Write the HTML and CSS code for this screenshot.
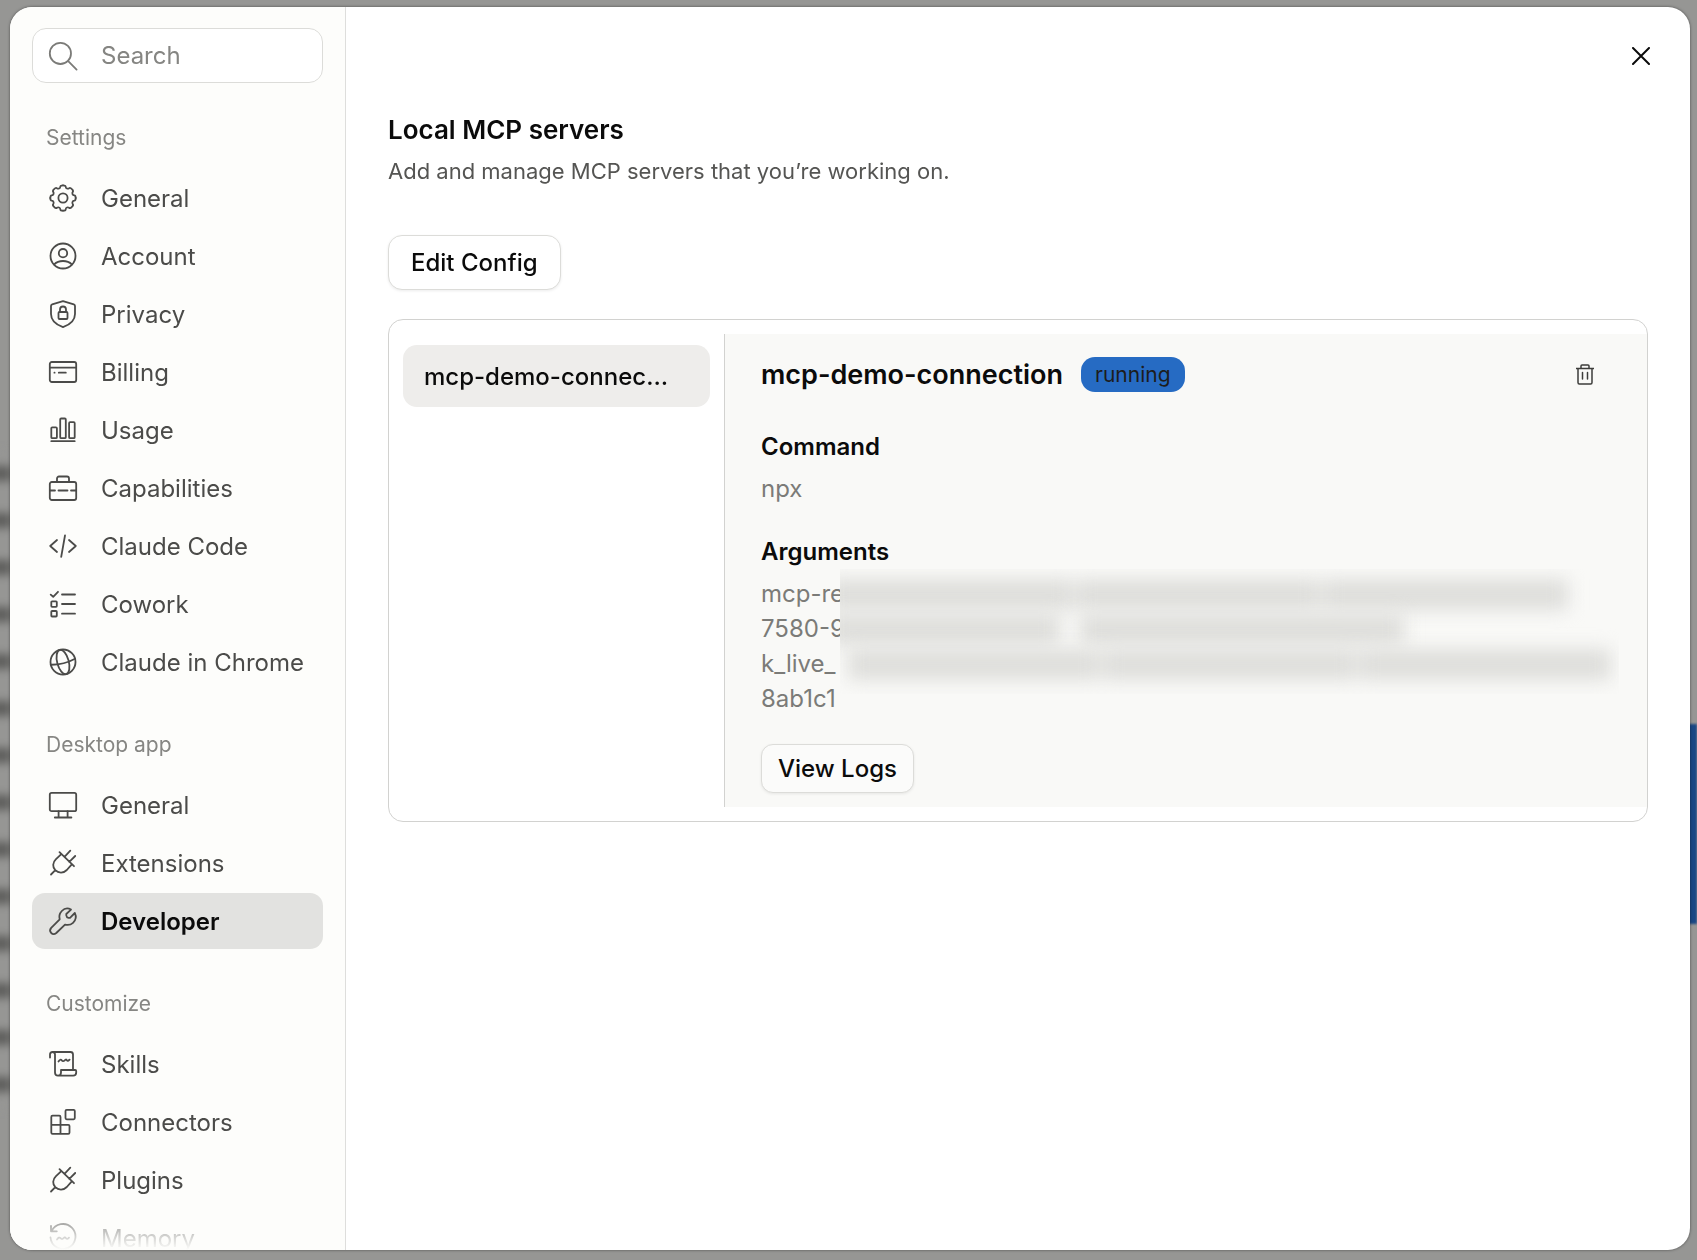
FILE: index.html
```
<!DOCTYPE html>
<html lang="en">
<head>
    <meta charset="UTF-8">
    <meta name="viewport" content="width=device-width, initial-scale=1.0">
    <title>Settings - Developer</title>
    <link rel="stylesheet" href="styles.css">
</head>
<body>
    <div class="behind" aria-hidden="true">
        <div class="behind-text"></div>
        <div class="behind-bubble"></div>
    </div>

    <div class="dialog" role="dialog" aria-label="Settings">
        <aside class="sidebar">
            <div class="search">
                <svg class="icon" viewBox="0 0 28 28"><circle cx="11.4" cy="11.4" r="10.6"/><path d="M19.2 19.2l8.4 8.4"/></svg>
                <input type="search" placeholder="Search" aria-label="Search">
            </div>

            <nav>
                <h2>Settings</h2>
                <ul>
                    <li><a href="#general">
                        <svg class="icon" viewBox="0 0 28 28">
                            <path id="gear" d="M14 1.3Q16.5 1.3 16.7 2.7Q16.8 4.1 17.9 4.5Q19 5 20.1 4.2Q21.2 3.3 22.9 5.1Q24.7 6.8 23.8 7.9Q23 9 23.5 10.1Q23.9 11.2 25.3 11.3Q26.7 11.5 26.7 14"/>
                            <use href="#gear" transform="rotate(90 14 14)"/>
                            <use href="#gear" transform="rotate(180 14 14)"/>
                            <use href="#gear" transform="rotate(270 14 14)"/>
                            <circle cx="14" cy="14" r="4.6"/>
                        </svg>General</a></li>
                    <li><a href="#account">
                        <svg class="icon" viewBox="0 0 28 28"><circle cx="14" cy="14" r="12.5"/><circle cx="14" cy="11.2" r="4.2"/><path d="M5.2 22.4C7.5 20 10.5 19 14 19s6.5 1 8.8 3.4"/></svg>Account</a></li>
                    <li><a href="#privacy">
                        <svg class="icon" viewBox="0 0 28 28"><path d="M14 1.2L24.8 4.3Q26 4.7 26 6V14C26 20.5 21.5 24.5 14 27.2C6.5 24.5 2 20.5 2 14V6Q2 4.7 3.2 4.3Z"/><rect x="9.5" y="12" width="9" height="7" rx="1"/><path d="M11 12V9.500a3 3 0 0 1 6 0V12"/></svg>Privacy</a></li>
                    <li><a href="#billing">
                        <svg class="icon" viewBox="0 0 28 28"><rect x=".8" y="4" width="26.4" height="20" rx="2"/><path d="M1 9.700h26M9.800 14.700h7M5.400 14.700h.2"/></svg>Billing</a></li>
                    <li><a href="#usage">
                        <svg class="icon" viewBox="0 0 28 28"><rect x="2.3" y="11.3" width="5.6" height="10.9" rx="1"/><rect x="11.2" y="2.5" width="5.6" height="19.7" rx="1"/><rect x="20.1" y="6.2" width="5.6" height="16" rx="1"/><path d="M2.300 25.200h23.400"/></svg>Usage</a></li>
                    <li><a href="#capabilities">
                        <svg class="icon" viewBox="0 0 28 28"><rect x=".8" y="8" width="26.4" height="18" rx="2"/><path d="M8 8V4.500a2 2 0 0 1 2-2h8a2 2 0 0 1 2 2V8M1 16.500h5M9.500 16.500h9M22 16.500h5"/></svg>Capabilities</a></li>
                    <li><a href="#claude-code">
                        <svg class="icon" viewBox="0 0 28 28"><path d="M8 8L1.2 14L8 20M20 8L26.8 14L20 20M16 3.500L12.200 24.800"/></svg>Claude Code</a></li>
                    <li><a href="#cowork">
                        <svg class="icon" viewBox="0 0 28 28"><path d="M1.700 4.600L4.200 6.800L9 1.800M13 4.500h13M13 14h13M13 23.700h13"/><rect x="2.3" y="11.3" width="5.5" height="5.5" rx=".8"/><rect x="2.3" y="21" width="5.5" height="5.5" rx=".8"/></svg>Cowork</a></li>
                    <li><a href="#chrome">
                        <svg class="icon" viewBox="0 0 28 28"><circle cx="14" cy="14" r="12.5"/><g transform="rotate(-15 14 14)"><ellipse cx="14" cy="14" rx="5.8" ry="12.5"/><path d="M1.500 13.500Q14 17 26.500 14"/></g></svg>Claude in Chrome</a></li>
                </ul>

                <h2>Desktop app</h2>
                <ul>
                    <li><a href="#desktop-general">
                        <svg class="icon" viewBox="0 0 28 28"><rect x=".8" y="1.8" width="26.4" height="18.4" rx="1.8"/><path d="M9.600 20.200v6M18.600 20.200v6M5.800 26.500h16.600"/></svg>General</a></li>
                    <li><a href="#extensions">
                        <svg class="icon" viewBox="0 0 28 28"><g id="plug"><path d="M10.500 3.200L25 17.200M12.300 5.200L7 10.200C3.500 13.500 3.300 18 6.300 21.200C9.600 24.500 14.500 24.300 17.800 21L22.800 15.300M2 25.500L6.300 21.200M15.500 7.800L21.300 1.700M20.300 12.800L26.200 7"/></g></svg>Extensions</a></li>
                    <li><a href="#developer" class="active" aria-current="page">
                        <svg class="icon" viewBox="0 0 28 28"><path d="M22 2.600L17.300 7V8.500Q17.500 10.500 19.500 10.800H21L25.800 6C27.500 9.500 26.500 13.500 24 15.800C21.700 18 18.700 18.300 16 17.600L7.300 26C5.500 27.500 3.500 27.300 2.200 26C.8 24.500 .8 22.500 2.200 20.900L10.700 12.300C9.900 9.300 10.600 6.300 12.800 4C15.300 1.400 19 .8 22 2.600Z"/></svg>Developer</a></li>
                </ul>

                <h2>Customize</h2>
                <ul>
                    <li><a href="#skills">
                        <svg class="icon" viewBox="0 0 28 28"><path d="M1 7.500V4.500Q1 2 3.500 2H21.500Q24 2 24 4.500V19.800M3.500 2Q6 2 6 4.500V22.500Q6 25.700 9 25.700H24.200Q27.200 25.700 27.200 22.500V21Q27.200 20 26.200 20H12V22.500Q12 25.700 9 25.700M9.500 11.600Q11.500 8.500 12.700 10.300T15.800 10.300Q16.800 8.800 17.800 10.200T20.600 9.600"/></svg>Skills</a></li>
                    <li><a href="#connectors">
                        <svg class="icon" viewBox="0 0 28 28"><path d="M11.500 16.800V9Q11.500 7.700 10.300 7.700H3.500Q2.300 7.700 2.300 9V24.500Q2.300 25.800 3.500 25.800H19.300Q20.500 25.800 20.500 24.500V18Q20.500 16.800 19.300 16.800H2.300M11.500 16.800V25.800"/><rect x="16.5" y="1.8" width="9.3" height="9.5" rx="1.2"/></svg>Connectors</a></li>
                    <li><a href="#plugins">
                        <svg class="icon" viewBox="0 0 28 28"><use href="#plug"/></svg>Plugins</a></li>
                    <li><a href="#memory">
                        <svg class="icon" viewBox="0 0 28 28"><path d="M2 2V7.300H7.800M2.600 7.300A12.500 12.500 0 1 1 1.500 13.500M8 15.500Q10 12.500 11.500 14.200T14.600 14.200Q15.800 12.700 17 14.200T20 13.600"/></svg>Memory</a></li>
                </ul>
            </nav>
        </aside>

        <main>
            <header class="topbar">
                <button class="icon-button" aria-label="Close">
                    <svg class="close-icon" viewBox="0 0 18 18"><path d="M1 1l16 16M17 1L1 17"/></svg>
                </button>
            </header>

            <div class="content">
                <h1>Local MCP servers</h1>
                <p class="subtitle">Add and manage MCP servers that you’re working on.</p>
                <button class="btn">Edit Config</button>

                <section class="servers">
                    <div class="server-list">
                        <button class="server">mcp-demo-connection</button>
                    </div>

                    <div class="detail">
                        <div class="detail-head">
                            <h2>mcp-demo-connection</h2>
                            <span class="badge">running</span>
                            <button class="icon-button delete" aria-label="Delete server">
                                <svg class="trash-icon" viewBox="0 0 18 21"><path d="M0 4.500H18M5 4.500V2Q5 1 6 1H12Q13 1 13 2V4.500M2 4.500V18.500Q2 20 3.300 20H14.700Q16 20 16 18.500V4.500M6.500 8.500V15M11.500 8.500V15"/></svg>
                            </button>
                        </div>

                        <div class="field">
                            <h3>Command</h3>
                            <p>npx</p>
                        </div>

                        <div class="field">
                            <h3>Arguments</h3>
                            <div class="args">
                                <p>mcp-re<br>7580-9<br>k_live_<br>8ab1c1</p>
                                <!-- the secret part of the arguments is blurred out -->
                                <div class="secret" aria-hidden="true">
                                    <div class="secret-line first"><i></i><i></i><i></i></div>
                                    <div class="secret-line second"><i></i><i></i></div>
                                    <div class="secret-line third"><i></i><i></i><i></i></div>
                                </div>
                            </div>
                        </div>

                        <button class="btn small">View Logs</button>
                    </div>
                </section>
            </div>
        </main>
    </div>
</body>
</html>
```

FILE: styles.css
```
* {
    margin: 0;
    padding: 0;
    box-sizing: border-box;
}
body {
    height: 100vh;
    padding: 7px 7px 10px 10px;
    overflow: hidden;
    background: #969694;
    font-family: Inter, "Liberation Sans", sans-serif;
    font-size: 24px;
    line-height: 35px;
    color: #0b0b0b;
}
button, input {
    font: inherit;
    color: inherit;
}
button {
    cursor: pointer;
}
ul {
    list-style: none;
}

/* dimmed page behind the dialog */
.behind {
    position: fixed;
    inset: 0;
    z-index: -1;
}
.behind-text {
    position: absolute;
    left: -12px;
    top: 450px;
    width: 24px;
    height: 660px;
    background: repeating-linear-gradient(#969694 0 16px, #5e5e5c 16px 31px, #969694 31px 47px);
    filter: blur(5px);
}
.behind-bubble {
    position: absolute;
    right: 0;
    top: 724px;
    width: 40px;
    height: 200px;
    background: #1a4784;
    filter: blur(1px);
}

.dialog {
    height: 100%;
    display: flex;
    overflow: hidden;
    background: white;
    border-radius: 22px;
    box-shadow: 0 0 3px rgba(0, 0, 0, 0.5);
}

/* sidebar */
.sidebar {
    flex: none;
    width: 336px;
    padding: 21px 22px 0;
    overflow: hidden;
    background: #fdfdfb;
    border-right: 1px solid #dededc;
    position: relative;
}
.sidebar::after {
    content: "";
    position: absolute;
    left: 0;
    right: 0;
    bottom: 0;
    height: 56px;
    background: linear-gradient(rgba(253, 253, 251, 0), #fdfdfb);
}
.search {
    height: 55px;
    padding: 0 16px;
    display: flex;
    align-items: center;
    gap: 24px;
    background: white;
    border: 1px solid #dcdcd9;
    border-radius: 14px;
    color: #7b7b78;
}
.search input {
    width: 100%;
    min-width: 0;
    border: none;
    outline: none;
    background: none;
}
.search input::placeholder {
    color: #858582;
}
.icon {
    flex: none;
    width: 28px;
    height: 28px;
    overflow: visible;
}
svg {
    fill: none;
    stroke: currentColor;
    stroke-width: 1.8;
    stroke-linecap: round;
    stroke-linejoin: round;
}
.sidebar h2 {
    margin: 39px 14px 16px;
    font-size: 21px;
    line-height: 32px;
    font-weight: 400;
    color: #868683;
}
.sidebar ul {
    display: grid;
    gap: 2px;
}
.sidebar a {
    height: 56px;
    padding: 0 17px;
    display: flex;
    align-items: center;
    gap: 24px;
    white-space: nowrap;
    color: #4b4b49;
    text-decoration: none;
    border-radius: 13px;
}
.sidebar a.active {
    background: #e2e2e0;
    color: #0b0b0b;
    font-weight: 600;
}
.active .icon {
    color: #4b4b49;
}

/* main column */
main {
    flex: 1;
    min-width: 0;
    padding-top: 25px;
}
.topbar {
    display: flex;
    justify-content: flex-end;
    padding-right: 25px;
}
.icon-button {
    width: 48px;
    height: 48px;
    display: flex;
    align-items: center;
    justify-content: center;
    border: none;
    background: none;
}
.close-icon {
    width: 18px;
    height: 18px;
    stroke-width: 2;
}
.content {
    padding: 32px 42px;
}
h1 {
    font-size: 26px;
    line-height: 36px;
    font-weight: 600;
}
.subtitle {
    margin: 7px 0 48px;
    font-size: 22px;
    line-height: 32px;
    color: #555553;
}
.btn {
    height: 55px;
    padding: 0 22px;
    background: white;
    border: 1px solid #dcdcd9;
    border-radius: 14px;
    box-shadow: 0 1px 3px rgba(0, 0, 0, 0.08);
    font-weight: 500;
}
.btn.small {
    height: 49px;
    padding: 0 16px;
    background: #fbfbfa;
    border-radius: 12px;
}

/* server card */
.servers {
    margin-top: 29px;
    padding: 14px 0;
    display: flex;
    border: 1px solid #d2d2d0;
    border-radius: 15px;
}
.server-list {
    flex: none;
    width: 335px;
    padding: 11px 14px;
}
.server {
    width: 100%;
    height: 62px;
    padding: 0 41px 0 21px;
    overflow: hidden;
    text-overflow: ellipsis;
    white-space: nowrap;
    text-align: left;
    font-weight: 500;
    border: none;
    border-radius: 14px;
    background: #eeedeb;
}
.detail {
    flex: 1;
    min-width: 0;
    padding: 16px 28px 14px 36px;
    background: #f9f9f7;
    border-left: 1px solid #d2d2d0;
}
.detail-head {
    display: flex;
    align-items: center;
    gap: 18px;
    padding-right: 10px;
    margin-bottom: 31px;
}
.detail-head h2 {
    font-size: 27px;
    font-weight: 600;
}
.badge {
    padding: 0 14px;
    border-radius: 14px;
    background: #266bc3;
    font-size: 21px;
    color: #1d1d1c;
}
.delete {
    margin-left: auto;
    color: #3d3d3b;
}
.trash-icon {
    width: 18px;
    height: 21px;
    stroke-width: 1.5;
}
.field {
    margin-bottom: 28px;
}
.field h3 {
    margin-bottom: 7px;
    font-size: 24px;
    font-weight: 600;
}
.field p {
    color: #7b7b78;
}
.args {
    display: flex;
}
.args p {
    flex: none;
    width: 79px;
    overflow: hidden;
    white-space: nowrap;
}

/* blurred argument text */
.secret {
    flex: 1;
    min-width: 0;
    height: 125px;
    margin-top: -7px;
    padding-top: 10px;
    overflow: hidden;
}
.secret-line {
    display: flex;
    gap: 3px;
    height: 31px;
    margin-bottom: 4px;
    margin-left: -12px;
    filter: blur(9px);
}
.secret-line i {
    flex: 1;
    background: #dededb;
}
.first {
    width: 95%;
}
.second {
    width: 74%;
    gap: 20px;
}
.second i:last-child {
    flex: 1.4;
}
.third {
    width: 98%;
    margin-left: 8px;
}
```
